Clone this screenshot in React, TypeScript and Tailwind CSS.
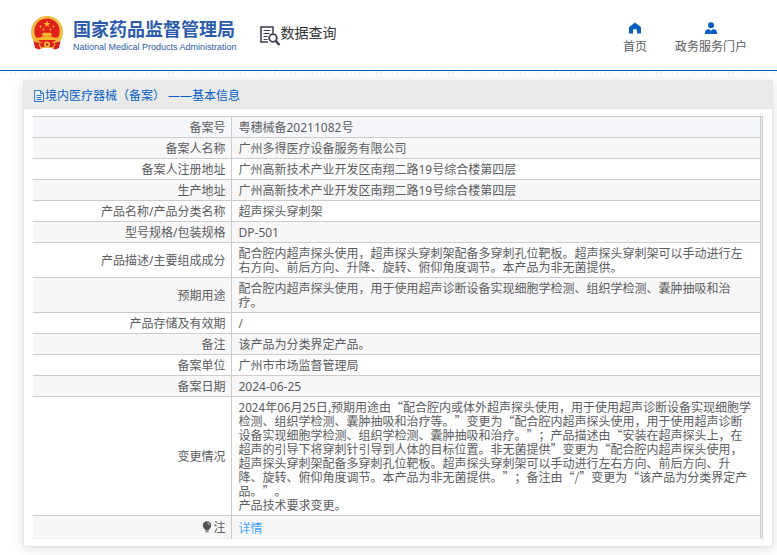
import React from 'react';

type Row = { label: string; value: string; link?: boolean; quoted?: boolean };

const ROWS: Row[] = [
  { label: '备案号', value: '粤穗械备20211082号' },
  { label: '备案人名称', value: '广州多得医疗设备服务有限公司' },
  { label: '备案人注册地址', value: '广州高新技术产业开发区南翔二路19号综合楼第四层' },
  { label: '生产地址', value: '广州高新技术产业开发区南翔二路19号综合楼第四层' },
  { label: '产品名称/产品分类名称', value: '超声探头穿刺架' },
  { label: '型号规格/包装规格', value: 'DP-501' },
  {
    label: '产品描述/主要组成成分',
    value:
      '配合腔内超声探头使用，超声探头穿刺架配备多穿刺孔位靶板。超声探头穿刺架可以手动进行左右方向、前后方向、升降、旋转、俯仰角度调节。本产品为非无菌提供。',
  },
  { label: '预期用途', value: '配合腔内超声探头使用，用于使用超声诊断设备实现细胞学检测、组织学检测、囊肿抽吸和治疗。' },
  { label: '产品存储及有效期', value: '/' },
  { label: '备注', value: '该产品为分类界定产品。' },
  { label: '备案单位', value: '广州市市场监督管理局' },
  { label: '备案日期', value: '2024-06-25' },
  {
    label: '变更情况',
    quoted: true,
    value:
      '2024年06月25日,预期用途由“配合腔内或体外超声探头使用，用于使用超声诊断设备实现细胞学检测、组织学检测、囊肿抽吸和治疗等。”变更为“配合腔内超声探头使用，用于使用超声诊断设备实现细胞学检测、组织学检测、囊肿抽吸和治疗。”；产品描述由“安装在超声探头上，在超声的引导下将穿刺针引导到人体的目标位置。非无菌提供”变更为“配合腔内超声探头使用，超声探头穿刺架配备多穿刺孔位靶板。超声探头穿刺架可以手动进行左右方向、前后方向、升降、旋转、俯仰角度调节。本产品为非无菌提供。”；备注由“/”变更为“该产品为分类界定产品。”。\n产品技术要求变更。',
  },
  { label: '注', value: '详情', link: true },
];

function Emblem() {
  return (
    <svg viewBox="0 0 34 36" className="h-9 w-[34px] shrink-0" aria-hidden="true">
      <circle cx="17" cy="17" r="16" fill="#efb233" />
      <circle cx="17" cy="17" r="14.3" fill="none" stroke="#f8d565" strokeWidth="1" strokeDasharray="2 1" />
      <circle cx="17" cy="16" r="12.6" fill="#e0211b" />
      <path d="m17 5.5.9 2.4h2.6l-2.1 1.5.8 2.5-2.2-1.5-2.2 1.5.8-2.5-2.1-1.5h2.6z" fill="#f5b52e" />
      <g fill="#f5b52e">
        <circle cx="10.5" cy="11.5" r="1" />
        <circle cx="23.5" cy="11.5" r="1" />
        <circle cx="13.5" cy="14.5" r="1" />
        <circle cx="20.5" cy="14.5" r="1" />
        <path d="m11.5 20 2-2.3h7l2 2.3zM13 20h8v1.6h-8z" />
        <path d="M6.5 25v-2.6H11v-1h12v1h4.5V25z" />
      </g>
      <path d="M3.5 26c3 1.5 6 2 9.5 2l4 1 4-1c3.5 0 6.5-.5 9.5-2L29 33l-4 1.5-3-1.5H12l-3 1.5L5 33z" fill="#d8201c" />
      <circle cx="17" cy="29.5" r="3" fill="#f3b93f" />
      <circle cx="17" cy="29.5" r="1.3" fill="#d8201c" />
      <path d="m9 28.5 2 5M25 28.5l-2 5M11.5 32.5h11" stroke="#f0b53d" strokeWidth="1.2" fill="none" />
    </svg>
  );
}

function SearchDocIcon() {
  return (
    <svg viewBox="0 0 21 20" className="mt-[3px] h-5 w-[21px] shrink-0" fill="none" stroke="#3b3a4c" aria-hidden="true">
      <path d="M8 16H1V1h12v6" strokeWidth="1.5" />
      <path d="M3.5 4.5h7M3.5 7.5h6M3.5 10.5h4M3.5 13.5h4" strokeWidth="1.2" />
      <circle cx="13" cy="12" r="3.8" strokeWidth="1.8" />
      <path d="m15.8 15 3.7 4" strokeWidth="2.4" />
    </svg>
  );
}

function HomeIcon() {
  return (
    <svg viewBox="0 0 12 12" className="size-3" fill="#0560c2" aria-hidden="true">
      <path d="M6 .4.5 4.8Q0 5.2 0 6v5.5h4V8q0-.7.7-.7h2.6q.7 0 .7.7v3.5h4V6q0-.8-.5-1.2z" />
    </svg>
  );
}

function UserIcon() {
  return (
    <svg viewBox="0 0 12 12" className="size-3" fill="#0560c2" aria-hidden="true">
      <circle cx="6" cy="3.2" r="3" />
      <path d="M0 12v-1.5C0 8.5 1.5 7.3 3.8 7L6 8.8 8.2 7c2.3.3 3.8 1.5 3.8 3.5V12z" />
    </svg>
  );
}

function FileIcon() {
  return (
    <svg viewBox="0 0 12 12" className="size-3 shrink-0" fill="none" stroke="#0560c2" strokeWidth="0.8" aria-hidden="true">
      <path d="M1.5.5h6l3 3v8h-9zM7.5.5v3h3M3.5 5.5h5M3.5 7.5h5M3.5 9.5h5" />
    </svg>
  );
}

function BulbIcon() {
  return (
    <svg viewBox="0 0 10 12" className="mr-px inline-block h-3 w-2.5 align-[-1px]" aria-hidden="true">
      <circle cx="5" cy="4.5" r="4.2" fill="#555" />
      <path d="M3 8h4v1.5H3zM3.5 10.2h3v1h-3z" fill="#555" />
      <path d="M5.5 2c1 .1 1.7.8 1.8 1.8" fill="none" stroke="#fff" strokeWidth="0.8" />
    </svg>
  );
}

export default function App() {
  return (
    <div className="bg-white text-xs text-[#5a5c60] font-['Noto_Sans','Noto_Sans_CJK_SC',sans-serif] [text-spacing-trim:space-all]">
      <header className="flex h-[71px] items-start border-b border-[#0560c2] px-[30px]">
        <a href="#" className="flex items-start gap-[9px] pt-[15px]">
          <Emblem />
          <span className="flex flex-col pt-0.5 whitespace-nowrap text-[#2b5cab]">
            <span className="text-lg leading-6 font-bold">国家药品监督管理局</span>
            <span className="text-[9px] leading-3 font-['Liberation_Sans',sans-serif]">National Medical Products Administration</span>
          </span>
        </a>
        <h1 className="ml-[23px] flex items-start pt-[23px] text-sm leading-5 whitespace-nowrap text-[#333]">
          <SearchDocIcon />
          数据查询
        </h1>
        <nav className="ml-auto flex gap-7 pt-[22px] leading-4 whitespace-nowrap">
          <a href="#" className="flex flex-col items-center gap-[5px]">
            <HomeIcon />
            首页
          </a>
          <a href="#" className="flex flex-col items-center gap-[5px]">
            <UserIcon />
            政务服务门户
          </a>
        </nav>
      </header>
      <div className="h-[3px] bg-[repeating-linear-gradient(135deg,#eee_0_1px,#fff_1px_3px)]" />

      <main className="mt-1.5 mr-1 mb-2 ml-[23px] border border-[#e6e6ea] bg-white shadow-[0_2px_12px_rgba(0,0,0,0.12)]">
        <h2 className="flex h-7 items-center bg-[#e9e9e9] pt-0.5 pl-[9px] text-[#0560c2]">
          <FileIcon />
          境内医疗器械（备案） ——基本信息
        </h2>
        <div className="px-[9px] py-[7px]">
          <div className="border-t border-r border-[#ccc] bg-[#eee] pr-px">
            <table className="w-full table-fixed border-collapse border-r border-[#ccc] leading-[14px]">
              <colgroup>
                <col className="w-[198px]" />
                <col />
              </colgroup>
              <tbody>
                {ROWS.map((row) => (
                  <tr
                    key={row.label}
                    className="border-b border-[#ccc] bg-white first:bg-[#f5f7fb] even:bg-[#f7f7f7] last:border-[#ebeef5]"
                  >
                    <th scope="row" className="border-r border-[#ccc] pt-1 pr-[5px] pb-0.5 text-right font-normal">
                      {row.link && <BulbIcon />}
                      {row.label}
                    </th>
                    <td
                      className={
                        row.quoted
                          ? "py-[3px] pr-2 pl-[7px] whitespace-pre-line font-['Noto_Sans_CJK_SC',sans-serif]"
                          : 'pt-1 pr-2 pb-0.5 pl-[7px]'
                      }
                    >
                      {row.link ? (
                        <a href="#" className="block pt-0.5 text-[#409eff]">{row.value}</a>
                      ) : (
                        row.value
                      )}
                    </td>
                  </tr>
                ))}
              </tbody>
            </table>
          </div>
        </div>
      </main>
    </div>
  );
}
